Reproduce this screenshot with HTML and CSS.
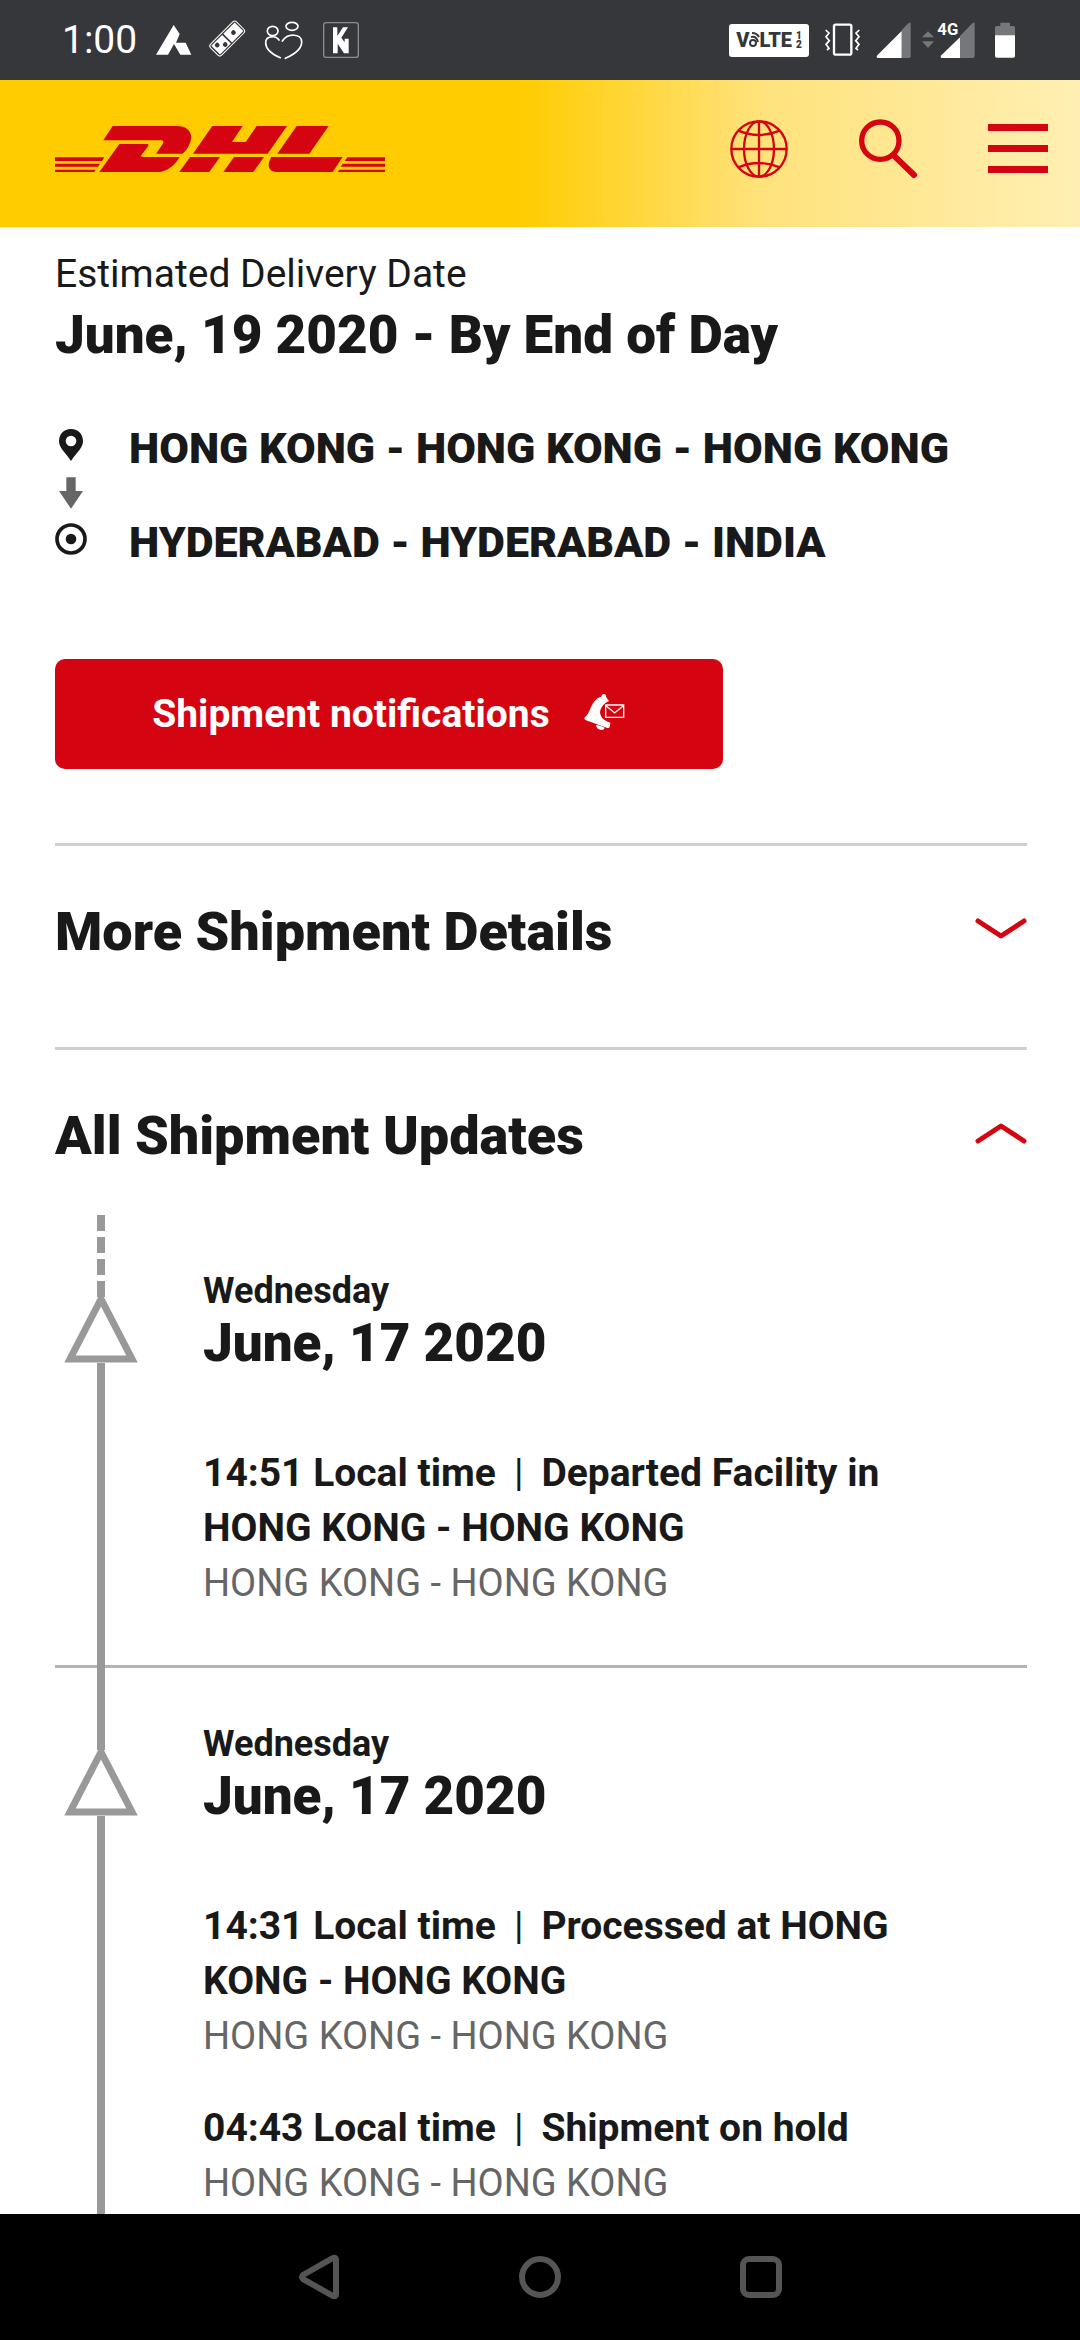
FILE: index.html
```html
<!DOCTYPE html>
<html lang="en">
<head>
<meta charset="utf-8">
<meta name="viewport" content="width=device-width, initial-scale=1">
<title>DHL Shipment Tracking</title>
<link rel="stylesheet" href="styles.css">
</head>
<body>
<div class="app">
  <div class="status">
    <div class="status-left">
      <span class="clock">1:00</span>
      <svg width="36" height="36" viewBox="0 0 108 108"><path fill="#fff" d="M53 9L71 36 60 62H89L106 98H73L54 66 36 98H0z"/></svg>
      <svg width="34" height="36" viewBox="0 0 102 108"><g transform="rotate(-45 49 50)"><rect x="-6" y="26" width="110" height="47" rx="8" fill="none" stroke="#fff" stroke-width="3"/><path fill="#fff" d="M0 31h46v37H0zM51 31h48v37H51z"/><g fill="#36373b"><circle cx="14" cy="42" r="7"/><circle cx="32" cy="58" r="7"/><circle cx="75" cy="50" r="7"/></g></g></svg>
      <svg width="40" height="38" viewBox="0 0 120 114" fill="none" stroke="#fff" stroke-width="5" stroke-linecap="round"><ellipse cx="26" cy="30" rx="16" ry="14"/><ellipse cx="84" cy="16" rx="18" ry="12"/><path d="M49 110C20 98 5 82 5 65 5 44 35 42 45 57M64 112C95 98 114 82 113 62 112 38 72 35 55 60"/></svg>
      <svg width="36" height="38" viewBox="0 0 108 114"><rect x="2" y="5" width="104" height="104" rx="8" fill="none" stroke="#8b8c90" stroke-width="4"/><path fill="#fff" d="M30 19h13v26l17-26h15L55 50l10 14V53h12v44H63L44 68v29H30z"/></svg>
    </div>
    <div class="status-right">
      <span class="volte"><span>V</span><svg width="10" height="16" viewBox="0 0 10 16" fill="none" stroke="#36373b" stroke-width="2"><circle cx="4" cy="11" r="3"/><path d="M2 5c4-1 6 1 7 5M3 1c4 0 6 2 7 4"/></svg><span>LTE</span><span class="sims"><span>1</span><span>2</span></span></span>
      <svg width="35" height="34" viewBox="0 0 105 102" fill="none" stroke="#fff"><rect x="27" y="5" width="52" height="90" rx="5" stroke-width="7"/><path stroke-width="5" d="M2 21l10 9-9 11 10 12-10 11 9 12-6 5M103 21l-10 9 9 11-10 12 10 11-9 12 6 5"/></svg>
      <svg width="103" height="38" viewBox="0 0 309 114"><path fill="#76777b" d="M77 27L98 6q6-4 6 2v98q0 5-5 5H77z"/><path fill="#fff" d="M77 30v81H4q-5-3 0-8z"/><path fill="#76777b" d="M138 49l18-18 18 18zM138 61l18 20 18-20zM252 45l38-39q6-4 6 2v98q0 5-5 5h-39z"/><path fill="#fff" d="M252 49v62h-56q-5-3 0-8z"/><text x="184" y="41" class="net">4G</text></svg>
      <svg width="20" height="36" viewBox="0 0 60 108"><path fill="#76777b" d="M16 2h29v10h10q5 0 5 5v24H0V17q0-5 5-5h11z"/><path fill="#fff" d="M0 40h60v62q0 5-5 5H5q-5 0-5-5z"/></svg>
    </div>
  </div>

  <header class="header">
    <a class="logo" href="#" aria-label="DHL home">
      <svg width="330" height="46" viewBox="45 378 990 138"><path fill="#d40511" d="M218 378H410C445 378 460 400 451 426 445 442 438 454 427 461H348L366 435C374 423 370 421 360 421H190zM238 432H320C327 432 327 435 322 442L305 464C301 470 304 471 310 471H419C405 496 380 516 355 516H178zM517 378H608L576 426H617L650 378H741L683 461H459zM450 471H540L508 516H418zM582 471H672L640 516H550zM770 378H866L808 461H712zM694 471H908L878 516H710C690 516 682 502 688 484zM45 472H193l-7 11H45zM45 491H180l-6 9H45zM45 509H167l-4 7H45zM922 472H1035v11H914zM908 491H1035v9H902zM898 509H1035v7H893z"/></svg>
    </a>
    <nav class="tools">
      <button type="button" aria-label="Language"><svg width="58" height="58" viewBox="0 0 174 174" fill="none" stroke="#d40511" stroke-width="7"><circle cx="87" cy="87" r="83"/><ellipse cx="87" cy="87" rx="45" ry="83"/><path d="M87 4V170M4 87H170M25 32Q87 58 149 32M25 142Q87 116 149 142"/></svg></button>
      <button type="button" aria-label="Search"><svg width="58" height="58" viewBox="0 0 174 174" fill="none" stroke="#d40511" stroke-linecap="round"><circle cx="64" cy="62" r="56" stroke-width="16"/><path stroke-width="18" d="M107 109L165 165"/></svg></button>
      <button type="button" aria-label="Menu"><svg width="60" height="50" viewBox="0 0 60 50"><path fill="#d40511" d="M0 0h60v7H0zM0 21h60v7H0zM0 42h60v7H0z"/></svg></button>
    </nav>
  </header>

  <main class="page">
    <p class="label">Estimated Delivery Date</p>
    <h1 class="title eta">June, 19 2020 - By End of Day</h1>

    <div class="route">
      <svg width="32" height="32" viewBox="0 0 96 96"><path fill="#191919" fill-rule="evenodd" d="M48 0C26 0 12 16 12 37 12 56 30 70 48 96 66 70 84 56 84 37 84 16 70 0 48 0zM48 20a16 16 0 1 1 0 32 16 16 0 0 1 0-32z"/></svg>
      <p>HONG KONG - HONG KONG - HONG KONG</p>
      <svg class="arrow" width="32" height="32" viewBox="0 0 96 96"><path fill="#666" d="M34 1h28v41h22L48 95 12 42h22z"/></svg>
      <svg width="32" height="32" viewBox="0 0 96 96"><circle cx="48" cy="48" r="42" fill="none" stroke="#191919" stroke-width="11"/><circle cx="48" cy="48" r="16" fill="#191919"/></svg>
      <p>HYDERABAD - HYDERABAD - INDIA</p>
    </div>

    <button type="button" class="notify">
      <span>Shipment notifications</span>
      <svg width="42" height="38" viewBox="0 0 126 114"><path fill="#fff" d="M52 11C52 2 62 0 65 7L68 15 75 24C57 32 50 44 48 58 50 74 58 82 76 88L79 90 77 102Q74 107 68 104L6 82Q-2 78 3 72C18 62 20 32 38 18 43 13 48 12 52 11zM36 97q3-3 26 7c-2 10-24 10-26-7z"/><path fill="none" stroke="#fff" stroke-width="4" d="M65 36h54v37H65zM66 38l26 22 26-22"/></svg>
    </button>

    <section class="panel">
      <h2><button type="button" class="toggle title" aria-expanded="false"><span>More Shipment Details</span><svg width="52" height="22" viewBox="0 0 52 22"><path d="M3 3L26 18 49 3"/></svg></button></h2>
    </section>

    <section class="panel">
      <h2><button type="button" class="toggle title" aria-expanded="true"><span>All Shipment Updates</span><svg width="52" height="22" viewBox="0 0 52 22"><path d="M3 19L26 4 49 19"/></svg></button></h2>

      <ol class="timeline">
        <li class="entry">
          <div class="rail">
            <span class="stem dashed"></span>
            <svg width="74" height="66" viewBox="0 0 74 66"><path d="M37 2L6 62H68z"/></svg>
            <span class="line"></span>
          </div>
          <div class="body">
            <p class="day">Wednesday</p>
            <h3 class="title date">June, 17 2020</h3>
            <div class="event">
              <p class="what">14:51 Local time<i class="bar">|</i>Departed Facility in<br>HONG KONG - HONG KONG</p>
              <p class="where">HONG KONG - HONG KONG</p>
            </div>
          </div>
        </li>
        <li class="entry">
          <div class="rail">
            <span class="stem"></span>
            <svg width="74" height="66" viewBox="0 0 74 66"><path d="M37 2L6 62H68z"/></svg>
            <span class="line"></span>
          </div>
          <div class="body">
            <p class="day">Wednesday</p>
            <h3 class="title date">June, 17 2020</h3>
            <div class="event">
              <p class="what">14:31 Local time<i class="bar">|</i>Processed at HONG<br>KONG - HONG KONG</p>
              <p class="where">HONG KONG - HONG KONG</p>
            </div>
            <div class="event">
              <p class="what">04:43 Local time<i class="bar">|</i>Shipment on hold</p>
              <p class="where">HONG KONG - HONG KONG</p>
            </div>
          </div>
        </li>
      </ol>
    </section>
  </main>

  <nav class="sysnav">
    <button type="button" aria-label="Back"><svg width="42" height="42" viewBox="0 0 42 42"><path d="M5 19L35 2q3-1 3 2v34q0 3-3 2L5 23q-2-2 0-4z"/></svg></button>
    <button type="button" aria-label="Home"><svg width="42" height="42" viewBox="0 0 42 42"><circle cx="21" cy="21" r="18"/></svg></button>
    <button type="button" aria-label="Recent apps"><svg width="42" height="42" viewBox="0 0 42 42"><rect x="3" y="3" width="36" height="36" rx="6"/></svg></button>
  </nav>
</div>
</body>
</html>
```
FILE: styles.css
```css
* {
  box-sizing: border-box;
}

body,
p,
h1,
h2,
h3,
ol {
  margin: 0;
  padding: 0;
}

body {
  background: #fff;
  color: #191919;
  font-family: Roboto, "Noto Sans", sans-serif;
  font-size: 39px;
  line-height: 55px;
}

button {
  border: 0;
  padding: 0;
  background: none;
  color: inherit;
  font: inherit;
  cursor: pointer;
}

svg {
  display: block;
  flex: none;
  overflow: visible;
}

.app {
  display: flex;
  flex-direction: column;
  height: 100vh;
}

/* Device status bar */
.status {
  flex: none;
  display: flex;
  justify-content: space-between;
  align-items: center;
  height: 80px;
  padding: 0 65px 0 62px;
  background: #36373b;
  color: #fff;
}

.status-left,
.status-right {
  display: flex;
  align-items: center;
}

.status-left {
  gap: 19px;
}

.status-right {
  gap: 16px;
}

.volte {
  display: flex;
  align-items: center;
  justify-content: center;
  width: 80px;
  height: 33px;
  border-radius: 3px;
  background: #fff;
  color: #36373b;
  font-size: 20px;
  font-weight: 900;
  line-height: 33px;
}

.sims {
  display: flex;
  flex-direction: column;
  margin-left: 4px;
  font-size: 10px;
  line-height: 9px;
}

.net {
  fill: #fff;
  font-size: 50px;
  font-weight: 700;
}

/* Brand header */
.header {
  flex: none;
  display: flex;
  justify-content: space-between;
  align-items: center;
  height: 147px;
  padding: 0 32px 10px 55px;
  background: linear-gradient(90deg, #fc0 0%, #fc0 48%, #ffe27a 70%, #ffefb3 100%);
}

.tools {
  display: flex;
  align-items: center;
  gap: 71px;
}

/* Page content */
.page {
  flex: 1;
  min-height: 0;
  overflow-y: auto;
  scrollbar-width: none;
  padding: 20px 53px 0 55px;
}

.title {
  font-size: 53px;
  font-weight: 900;
  line-height: 66px;
}

.route {
  display: grid;
  grid-template-columns: 32px 1fr;
  column-gap: 42px;
  align-items: center;
  margin-top: 55px;
  font-size: 43px;
  font-weight: 900;
  line-height: 50px;
}

.route svg {
  margin-bottom: 6px;
}

.route .arrow {
  grid-column: 1 / -1;
  margin: 4px 0 8px;
}

.notify {
  display: flex;
  align-items: center;
  justify-content: center;
  gap: 34px;
  min-width: 668px;
  height: 110px;
  margin: 92px 0 74px;
  border-radius: 10px;
  background: #d40511;
  color: #fff;
  font-weight: 700;
}

.notify svg {
  margin-bottom: 4px;
}

.panel {
  border-top: 3px solid #d0d0d0;
}

.toggle {
  display: flex;
  justify-content: space-between;
  align-items: center;
  width: 100%;
  padding: 53px 0 82px;
  font-size: 54px;
  text-align: left;
}

.toggle[aria-expanded="true"] {
  padding-bottom: 46px;
}

.toggle svg {
  margin-bottom: 6px;
}

.toggle path {
  fill: none;
  stroke: #d40511;
  stroke-width: 5;
  stroke-linecap: round;
  stroke-linejoin: round;
}

/* Shipment timeline */
.timeline {
  list-style: none;
}

.entry {
  display: grid;
  grid-template-columns: 92px 1fr;
  column-gap: 56px;
  border-bottom: 3px solid #b3b3b3;
}

.rail {
  display: flex;
  flex-direction: column;
  align-items: center;
  margin-bottom: -3px;
}

.rail path {
  fill: #fff;
  stroke: #999;
  stroke-width: 7;
}

.stem {
  width: 8px;
  height: 82px;
  background: #999;
}

.stem.dashed {
  background: repeating-linear-gradient(#999 0 16px, transparent 16px 22px);
}

.line {
  flex: 1;
  width: 8px;
  background: #999;
}

.body {
  padding: 54px 100px 54px 0;
}

.day {
  font-size: 36px;
  font-weight: 700;
  line-height: 44px;
}

.date {
  margin-bottom: 73px;
  line-height: 60px;
}

.event + .event {
  margin-top: 37px;
}

.what {
  font-weight: 700;
}

.bar {
  padding: 0 18px;
  font-style: normal;
  font-weight: 400;
}

.where {
  color: #666;
  font-size: 38px;
}

/* Device navigation bar */
.sysnav {
  flex: none;
  display: flex;
  justify-content: center;
  align-items: center;
  gap: 179px;
  height: 126px;
  background: #000;
}

.sysnav svg {
  fill: none;
  stroke: #555;
  stroke-width: 6;
}
```
